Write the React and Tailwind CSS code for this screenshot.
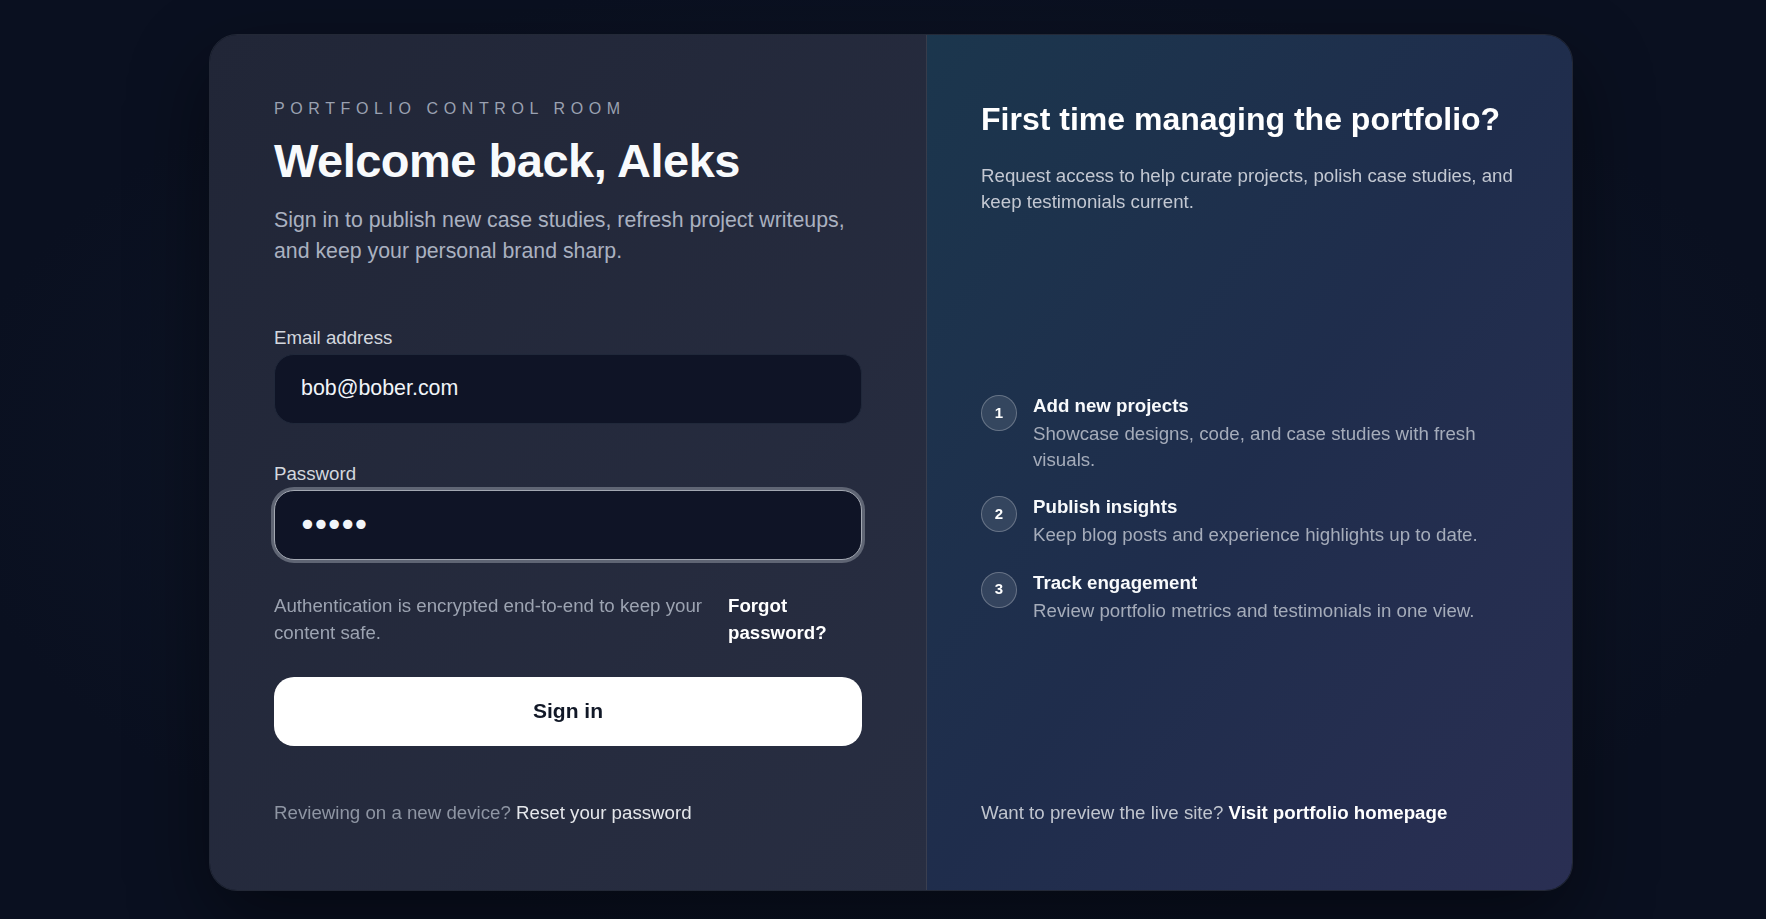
import { useState } from 'react';

const steps = [
  { n: 1, title: 'Add new projects', text: 'Showcase designs, code, and case studies with fresh visuals.' },
  { n: 2, title: 'Publish insights', text: 'Keep blog posts and experience highlights up to date.' },
  { n: 3, title: 'Track engagement', text: 'Review portfolio metrics and testimonials in one view.' },
];

function App() {
  const [email, setEmail] = useState('bob@bober.com');
  const [password, setPassword] = useState('bober');

  return (
    <div className="min-h-screen w-full flex items-center justify-center pl-4 pt-[6px] bg-[#0a1020] bg-[radial-gradient(ellipse_at_center,#111a2d_0%,#0a1020_75%)] font-['Liberation_Sans',Arial,sans-serif]">
      <div className="w-[1364px] h-[857px] flex rounded-[28px] border border-white/10 overflow-hidden shadow-[0_30px_80px_rgba(0,0,0,0.45)]">
        {/* left: sign in form */}
        <div className="w-[717px] shrink-0 flex flex-col px-16 pt-[62px] pb-16 border-r border-white/10 bg-linear-to-br from-[#212637] to-[#282e42]">
          <p className="text-[16px] leading-6 tracking-[0.35em] uppercase text-[#9aa1b1]">Portfolio control room</p>
          <h1 className="mt-[14px] text-[47px] leading-[1.1] font-bold tracking-[-0.5px] text-[#f8fafc]">Welcome back, Aleks</h1>
          <p className="mt-[18px] text-[21.3px] leading-[31.5px] text-[#aab1c0]">
            Sign in to publish new case studies, refresh project writeups, and keep your personal brand sharp.
          </p>

          <form className="mt-[56px]" onSubmit={(e) => e.preventDefault()}>
            <label htmlFor="email" className="block text-[18.7px] leading-[27px] text-[#d3d7de] mb-[3px]">Email address</label>
            <input
              id="email"
              type="email"
              value={email}
              onChange={(e) => setEmail(e.target.value)}
              className="w-full h-[70px] rounded-[20px] border border-[#20283a] bg-[#0f1426] pl-[26px] pr-6 text-[21.4px] text-[#f1f5f9] outline-none"
            />

            <label htmlFor="password" className="block mt-[36px] text-[18.7px] leading-[27px] text-[#d3d7de] mb-[3px]">Password</label>
            <input
              id="password"
              type="password"
              autoFocus
              value={password}
              onChange={(e) => setPassword(e.target.value)}
              className="w-full h-[70px] rounded-[20px] border border-[#a3a8b2] ring-[3px] ring-[#5f6574] bg-[#0f1426] pl-[23px] pr-6 text-[32px] tracking-[-5.5px] text-[#f1f5f9] outline-none font-['DejaVu_Sans',sans-serif]"
            />

            <div className="mt-[32px] flex items-start justify-between gap-5">
              <p className="flex-1 text-[18.7px] leading-[27px] text-[#9ca3b1]">
                Authentication is encrypted end-to-end to keep your content safe.
              </p>
              <a href="#" className="w-[134px] shrink-0 text-[18.7px] leading-[27px] font-bold text-white">Forgot password?</a>
            </div>

            <button
              type="submit"
              className="mt-[31px] w-full h-[69px] rounded-[20px] bg-white text-[21px] font-bold text-[#111827]"
            >
              Sign in
            </button>
          </form>

          <p className="mt-auto text-[18.7px] leading-[27px] text-[#8e95a3]">
            Reviewing on a new device? <a href="#" className="text-[#e5e7eb]">Reset your password</a>
          </p>
        </div>

        {/* right: onboarding info */}
        <div className="flex-1 flex flex-col justify-between px-[54px] pt-16 pb-16 bg-linear-to-br from-[#1b364d] via-[#1f2d4c] to-[#2a2f53]">
          <div>
            <h2 className="text-[32px] leading-10 font-bold text-white">First time managing the portfolio?</h2>
            <p className="mt-[24px] text-[18.7px] leading-[26px] text-[#c3c8d2]">
              Request access to help curate projects, polish case studies, and keep testimonials current.
            </p>
          </div>

          <ul className="flex flex-col gap-[22px] pt-[2px]">
            {steps.map((s) => (
              <li key={s.n} className="flex items-start gap-4">
                <span className="mt-[2px] w-9 h-9 shrink-0 rounded-full border border-white/25 bg-white/10 flex items-center justify-center text-[15px] font-bold text-white">
                  {s.n}
                </span>
                <div>
                  <div className="text-[18.7px] leading-[26px] font-bold text-[#f8fafc]">{s.title}</div>
                  <div className="mt-[2px] text-[18.7px] leading-[25.5px] text-[#a5acba]">{s.text}</div>
                </div>
              </li>
            ))}
          </ul>

          <p className="text-[18.7px] leading-[27px] text-[#c0c5ce]">
            Want to preview the live site? <a href="#" className="font-bold text-white">Visit portfolio homepage</a>
          </p>
        </div>
      </div>
    </div>
  );
}

export default App;
